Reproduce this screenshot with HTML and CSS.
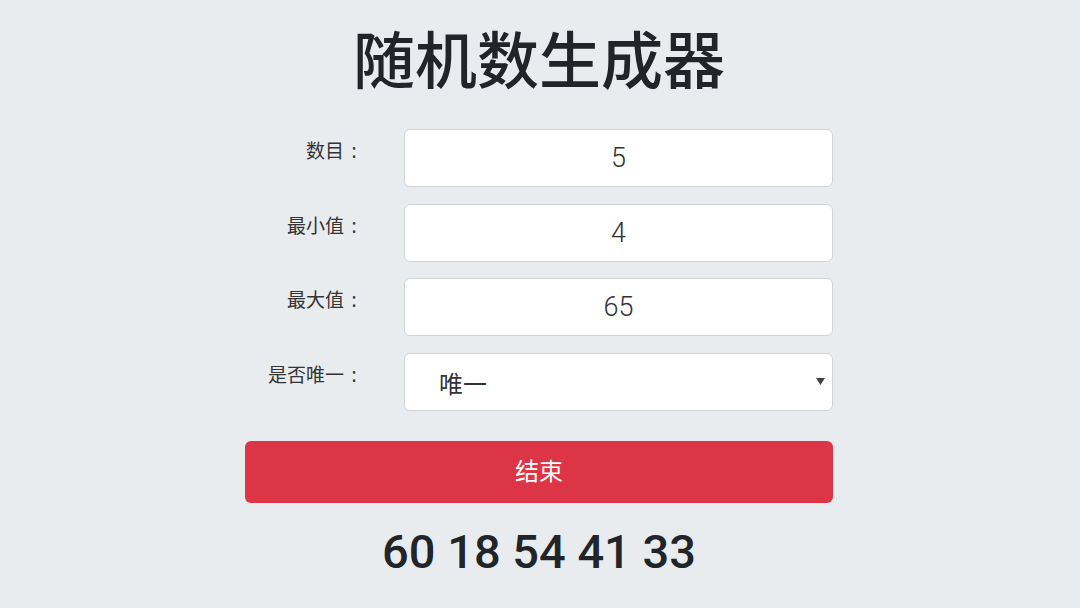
FILE: index.html
```html
<!DOCTYPE html>
<html lang="zh-CN">
<head>
<meta charset="utf-8">
<title>随机数生成器</title>
<link rel="stylesheet" href="styles.css">
</head>
<body>
<main class="app">
  <h1 class="title">随机数生成器</h1>
  <form class="form">
    <div class="row">
      <label class="label" for="count">数目<span class="colon">:</span></label>
      <input class="field" id="count" type="text" value="5">
    </div>
    <div class="row">
      <label class="label" for="min">最小值<span class="colon">:</span></label>
      <input class="field" id="min" type="text" value="4">
    </div>
    <div class="row">
      <label class="label" for="max">最大值<span class="colon">:</span></label>
      <input class="field" id="max" type="text" value="65">
    </div>
    <div class="row">
      <label class="label" for="unique">是否唯一<span class="colon">:</span></label>
      <div class="select-wrap">
        <select class="field select" id="unique">
          <option>唯一</option>
          <option>不唯一</option>
        </select>
        <svg class="caret" width="9" height="7" viewBox="0 0 9 7" aria-hidden="true"><path d="M0 0H9L4.5 7Z" fill="#444"/></svg>
      </div>
    </div>
    <button class="btn" type="button">结束</button>
  </form>
  <div class="result">60 18 54 41 33</div>
</main>
</body>
</html>
```
FILE: styles.css
```css
html, body {
  margin: 0;
  padding: 0;
  background: #e9ecef;
}
body {
  font-family: "Noto Sans CJK SC", "Noto Sans", sans-serif;
  color: #212529;
}
.app {
  width: 588px;
  margin: 0 auto;
  padding: 20px 2px 0 0;
}
.title {
  margin: 0 0 35px;
  font-size: 62px;
  line-height: 74px;
  font-weight: 500;
  text-align: center;
  color: #212529;
}
.form {
  display: flex;
  flex-direction: column;
  gap: 16.7px;
}
.row {
  display: grid;
  grid-template-columns: 159px 1fr;
  align-items: start;
}
.label {
  box-sizing: border-box;
  padding: 7px 40px 0 0;
  font-size: 19px;
  line-height: 27px;
  text-align: right;
  color: #333;
}
.colon {
  display: inline-block;
  width: 20px;
  text-align: center;
  font-family: "Noto Sans", sans-serif;
}
.field {
  box-sizing: border-box;
  width: 100%;
  height: 58px;
  margin: 0;
  border: 1.5px solid #d0d4d9;
  border-radius: 6px;
  background: #fff;
  font-family: Roboto, "Noto Sans CJK SC", sans-serif;
  font-size: 27px;
  font-weight: 300;
  color: #333;
  text-align: center;
  outline: none;
}
.select-wrap {
  position: relative;
}
.select {
  appearance: none;
  -webkit-appearance: none;
  text-align: left;
  padding: 0 0 0 34px;
  font-family: "Noto Sans CJK SC", sans-serif;
  font-size: 24px;
  font-weight: 400;
  color: #333;
}
.caret {
  position: absolute;
  right: 8px;
  top: 25px;
}
.btn {
  margin-top: 13.3px;
  height: 62px;
  padding: 0 0 5px;
  border: none;
  border-radius: 6px;
  background: #dc3545;
  color: #fff;
  font-family: "Noto Sans CJK SC", sans-serif;
  font-size: 24px;
}
.result {
  margin-top: 21px;
  font-family: Roboto, sans-serif;
  font-size: 47px;
  line-height: 56px;
  font-weight: 500;
  text-align: center;
  color: #212529;
}
```
